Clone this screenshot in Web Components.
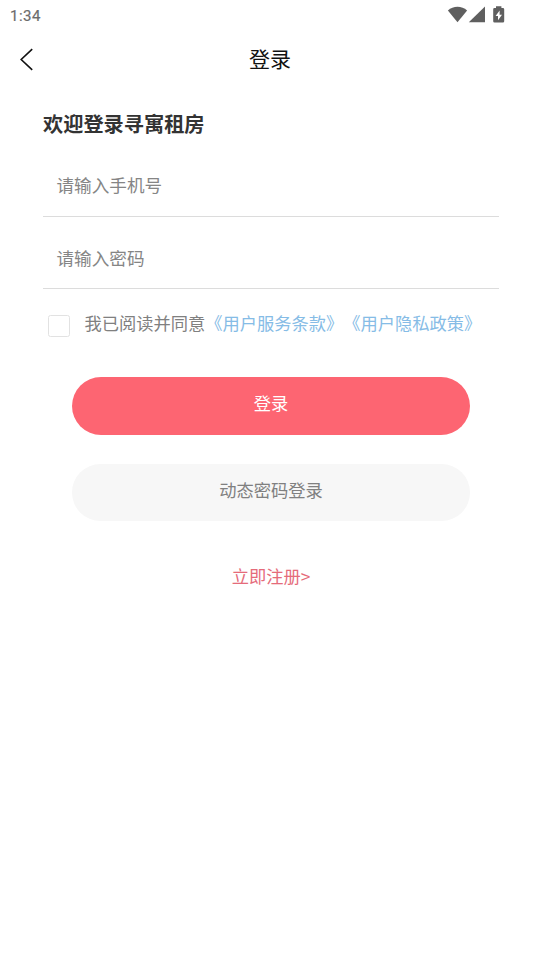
<!DOCTYPE html>
<html lang="zh-CN">
<head>
<meta charset="utf-8">
<title>登录</title>
<style>
html,body{margin:0;background:#fff}
body{width:540px;height:960px;overflow:hidden;font-family:"Noto Sans CJK SC",sans-serif;text-spacing-trim:space-all}
</style>
</head>
<body>
<login-page></login-page>
<script>
function define(name, html) {
  const t = document.createElement('template');
  t.innerHTML = html;
  customElements.define(name, class extends HTMLElement {
    constructor() {
      super();
      this.attachShadow({mode: 'open'}).append(t.content.cloneNode(true));
    }
  });
}

define('status-bar', `
<style>
:host{display:flex;justify-content:space-between;box-sizing:border-box;height:32px;padding:0 35px 0 10px;color:#6c6c6c}
span{font:400 15px/32px Roboto,sans-serif;letter-spacing:.5px;-webkit-text-stroke:.2px #6c6c6c}
svg{display:block}
</style>
<span><slot></slot></span>
<svg width="58" height="32" viewBox="0 0 58 32" fill="#5f5f5f">
<path d="M.9 10.4C6.2 5.6 14.8 5.6 20.1 10.4L10.5 22.3Z"/>
<path d="M38 6.5V22.3H21.8Z"/>
<path d="M49 6.3h5.4v1.6h1.5q1.3 0 1.3 1.3v12q0 1.3-1.3 1.3h-8.4q-1.3 0-1.3-1.3v-12q0-1.3 1.3-1.3H49Z"/>
<path d="M52.6 10.5L48.6 16h2.4v4.3l4-5.6h-2.4Z" fill="#fff"/>
</svg>`);

define('nav-bar', `
<style>
:host{display:grid;grid-template-columns:60px 1fr 60px;align-items:center;height:54px;color:#111}
svg{display:block;margin-left:18px}
h1{margin:0;padding-bottom:3px;font-size:21px;line-height:30px;font-weight:400;text-align:center}
</style>
<svg width="18" height="24" viewBox="0 0 18 24" fill="none" stroke="#111" stroke-width="1.6"><path d="M14.2 2.2L3.2 12.5L14.2 22.8"/></svg>
<h1><slot></slot></h1>`);

define('text-field', `
<style>
:host{display:block;box-sizing:border-box;border-bottom:1px solid #dcdcdc;padding-left:13.5px;font-size:17.6px;line-height:26px;color:#858585}
</style><slot></slot>`);

define('agree-row', `
<style>
:host{display:flex;align-items:flex-start;font-size:17.25px;line-height:26px;color:#808080;white-space:nowrap}
i{box-sizing:border-box;flex:none;width:22px;height:22px;margin:5px 14.5px 0 5px;border:1.3px solid #e2e2e2;border-radius:2.5px}
::slotted(a){color:#86bce6}
</style><i></i><div><slot></slot></div>`);

define('pill-button', `
<style>
:host{display:block;box-sizing:border-box;height:58px;border-radius:29px;padding-top:13px;background:#f7f7f7;color:#808080;font-size:17.25px;line-height:26px;text-align:center}
:host([primary]){background:#fd6572;color:#fff}
</style><slot></slot>`);

define('login-page', `
<style>
:host{display:block}
main{display:flex;flex-direction:column;padding:0 41px 0 43px}
h2{margin:24px 0 0;font-size:20.2px;line-height:28px;font-weight:700;color:#333}
.phone{height:58px;padding-top:13px;margin-top:21px}
.pass{height:72px;padding-top:28px}
agree-row{margin-top:21px}
.buttons{display:flex;flex-direction:column;gap:29px;padding:0 29px;margin-top:40px}
.second{height:57px}
.reg{margin-top:42px;text-align:center;font-size:17.25px;line-height:26px;color:#e56b7a}
</style>
<status-bar>1:34</status-bar>
<nav-bar>登录</nav-bar>
<main>
<h2>欢迎登录寻寓租房</h2>
<text-field class="phone">请输入手机号</text-field>
<text-field class="pass">请输入密码</text-field>
<agree-row>我已阅读并同意<a>《用户服务条款》</a><a>《用户隐私政策》</a></agree-row>
<div class="buttons">
<pill-button primary>登录</pill-button>
<pill-button class="second">动态密码登录</pill-button>
</div>
<div class="reg">立即注册&gt;</div>
</main>`);
</script>
</body>
</html>
